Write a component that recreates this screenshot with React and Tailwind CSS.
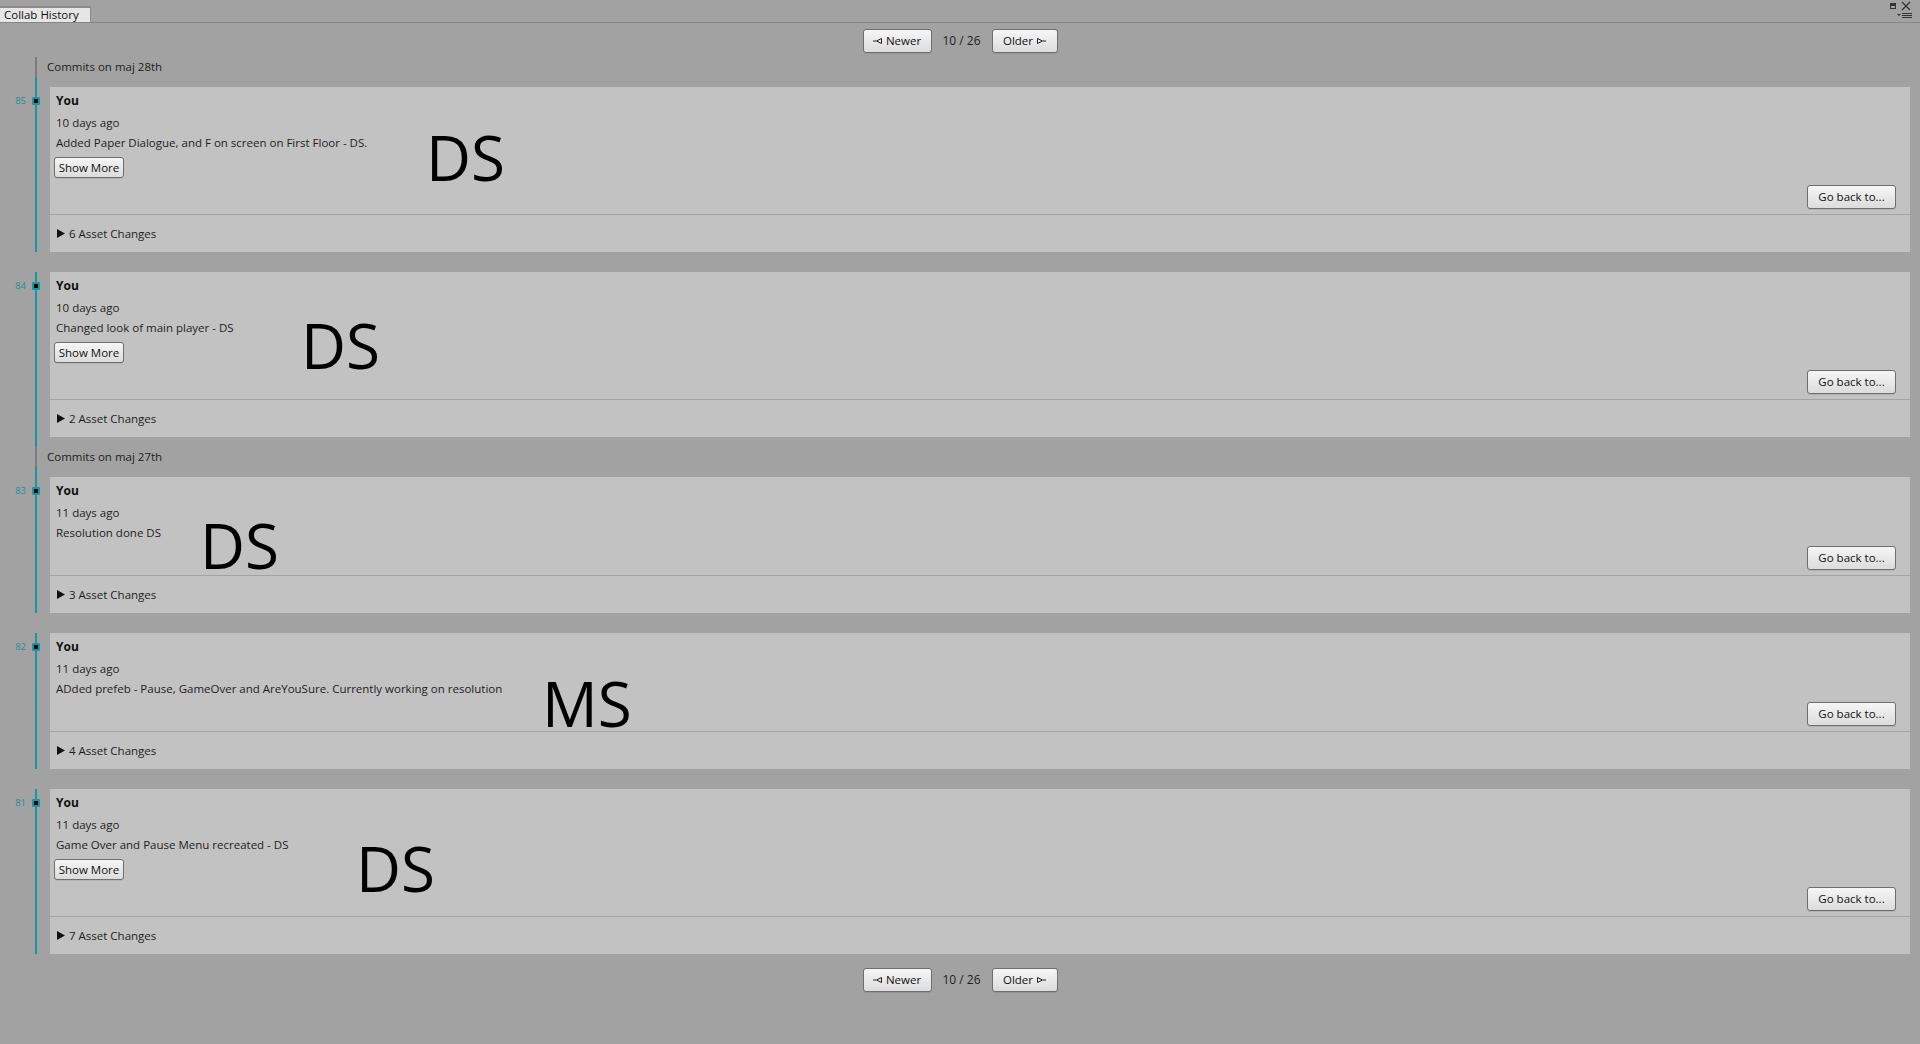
import React from "react";

const TEAL = "bg-[#1796a3]";

function LeftArrow() {
  return (
    <svg width="9" height="6" viewBox="0 0 9 6" className="mr-[4px]">
      <line x1="0" y1="3" x2="3" y2="3" stroke="#222" strokeWidth="1" />
      <path d="M8.5 0.5 L3.5 3 L8.5 5.5 Z" fill="none" stroke="#222" strokeWidth="1" />
    </svg>
  );
}

function RightArrow() {
  return (
    <svg width="9" height="6" viewBox="0 0 9 6" className="ml-[4px]">
      <path d="M0.5 0.5 L5.5 3 L0.5 5.5 Z" fill="none" stroke="#222" strokeWidth="1" />
      <line x1="6" y1="3" x2="9" y2="3" stroke="#222" strokeWidth="1" />
    </svg>
  );
}

function Btn({ children, className = "" }) {
  return (
    <div
      className={
        "flex items-center justify-center rounded-[3px] border border-[#6e6e6e] bg-gradient-to-b from-[#f6f6f6] to-[#dcdcdc] text-[11.5px] text-[#111] shadow-[0_1px_0_rgba(0,0,0,0.08)] " +
        className
      }
    >
      {children}
    </div>
  );
}

function Nav({ className = "" }) {
  return (
    <div className={"flex justify-center items-center gap-[10px] " + className}>
      <Btn className="w-[69px] h-[24px]">
        <LeftArrow />
        Newer
      </Btn>
      <span className="text-[12px] text-[#1e1e1e] w-[40px] text-center">10 / 26</span>
      <Btn className="w-[66px] h-[24px]">
        Older
        <RightArrow />
      </Btn>
    </div>
  );
}

function Header({ text, first }) {
  return (
    <div className={"flex " + (first ? "h-[34px]" : "h-[40px]")}>
      <div className="w-[47px] shrink-0 flex flex-col">
        {first ? (
          <div className="h-[4px] ml-[35px] w-[2px]" />
        ) : (
          <div className={"h-[10px] ml-[35px] w-[2px] " + TEAL} />
        )}
        <div className="h-[20px] ml-[35px] w-[2px] bg-[#7c7c7c]" />
        <div className={"h-[10px] ml-[35px] w-[2px] " + TEAL} />
      </div>
      <div className={"flex items-center text-[11.5px] text-[#1e1e1e] " + (first ? "pb-[6px]" : "")}>
        {text}
      </div>
    </div>
  );
}

function Card({ num, desc, days, showMore, changes, label, labelPos, pb }) {
  return (
    <div className={"flex " + pb}>
      <div className="relative w-[50px] shrink-0 flex">
        <div className={"ml-[35px] w-[2px] " + TEAL} />
        <span className="absolute right-[24px] top-[8px] text-[9.5px] leading-[12px] text-[#1f8f9c]">
          {num}
        </span>
        <div className="absolute left-[32px] top-[10px] w-[8px] h-[8px] rounded-[1px] bg-[#1796a3] flex items-center justify-center">
          <div className="w-[4px] h-[4px] bg-black" />
        </div>
      </div>
      <div className="relative flex-1 mr-[10px] bg-[#c2c2c2] flex flex-col">
        <div className="flex flex-col pt-[5px] pl-[4px] pr-[14px] pb-[5px]">
          <div className="pl-[2px] h-[18px] flex items-center text-[12px] font-bold text-[#111]">You</div>
          <div className="pl-[2px] mt-[4px] h-[18px] flex items-center text-[11.5px] text-[#1e1e1e]">{days}</div>
          <div className="pl-[2px] mt-[2px] h-[18px] flex items-center text-[11.5px] text-[#1e1e1e]">{desc}</div>
          {showMore && (
            <Btn className="mt-[5px] w-[70px] h-[21px] self-start">Show More</Btn>
          )}
          <Btn className={(showMore ? "mt-[7px]" : "mt-[4px]") + " w-[89px] h-[24px] self-end"}>Go back to...</Btn>
        </div>
        <div className="border-t border-[#a4a4a4] h-[38px] flex items-center pl-[7px] text-[11.5px] text-[#1e1e1e]">
          <svg width="8" height="9" viewBox="0 0 8 9" className="mr-[4px]">
            <path d="M0 0 L8 4.5 L0 9 Z" fill="#111" />
          </svg>
          {changes} Asset Changes
        </div>
        <div
          className="absolute font-['Open_Sans',sans-serif] text-[62px] leading-none text-black pointer-events-none"
          style={{ left: labelPos[0], top: labelPos[1] }}
        >
          {label}
        </div>
      </div>
    </div>
  );
}

export default function App() {
  return (
    <div className="min-h-[1044px] bg-[#a2a2a2] font-['Open_Sans',sans-serif] text-[#1e1e1e]">
      <div className="h-[23px] flex justify-between border-b border-[#868686]">
        <div className="mt-[6px] h-[16px] w-[91px] border-t-2 border-[#5b9be6] border-r border-[#8a8a8a] bg-[#e6e6e6] flex items-center pl-[4px] text-[11.5px] text-[#111]">
          Collab History
        </div>
        <svg width="28" height="20" viewBox="0 0 28 20" className="mr-[4px]">
          <rect x="2.5" y="3.5" width="5" height="5" fill="none" stroke="#333" />
          <rect x="3" y="4" width="4" height="2" fill="#333" />
          <path d="M14 2 L22 10 M22 2 L14 10" stroke="#333" strokeWidth="1.2" />
          <path d="M9 14 L13 14 L11 16 Z" fill="#333" />
          <path d="M14 13.5 H24 M14 15.5 H24 M14 17.5 H24" stroke="#333" strokeWidth="1" />
        </svg>
      </div>
      <Nav className="pt-[6px]" />
      <Header first text="Commits on maj 28th" />
      <Card num="85" days="10 days ago" desc="Added Paper Dialogue, and F on screen on First Floor - DS." showMore changes={6} label="DS" labelPos={[376, 39]} pb="pb-[20px]" />
      <Card num="84" days="10 days ago" desc="Changed look of main player - DS" showMore changes={2} label="DS" labelPos={[251, 42]} pb="pb-0" />
      <Header text="Commits on maj 27th" />
      <Card num="83" days="11 days ago" desc="Resolution done DS" changes={3} label="DS" labelPos={[150, 37]} pb="pb-[20px]" />
      <Card num="82" days="11 days ago" desc="ADded prefeb - Pause, GameOver and AreYouSure. Currently working on resolution" changes={4} label="MS" labelPos={[492, 39]} pb="pb-[20px]" />
      <Card num="81" days="11 days ago" desc="Game Over and Pause Menu recreated - DS" showMore changes={7} label="DS" labelPos={[306, 48]} pb="pb-[9px]" />
      <Nav className="pt-[5px]" />
    </div>
  );
}
